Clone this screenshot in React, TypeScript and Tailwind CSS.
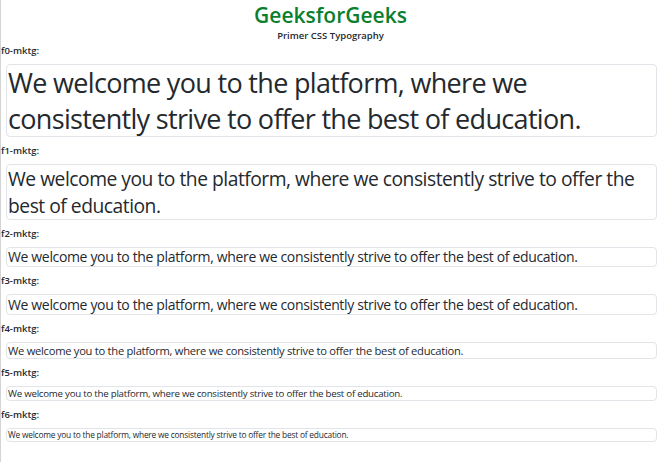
const TEXT =
  "We welcome you to the platform, where we consistently strive to offer the best of education.";

type Row = {
  label: string;
  textClass: string;
};

const ROWS: Row[] = [
  { label: "f0-mktg:", textClass: "text-[27px] leading-[35.5px] tracking-[-0.68px]" },
  { label: "f1-mktg:", textClass: "text-[19.25px] leading-[27px] tracking-[-0.48px]" },
  { label: "f2-mktg:", textClass: "text-[14px] leading-[18px] tracking-[-0.35px]" },
  { label: "f3-mktg:", textClass: "text-[14px] leading-[19px] tracking-[-0.35px]" },
  { label: "f4-mktg:", textClass: "text-[11.2px] leading-[15px] tracking-[-0.28px]" },
  { label: "f5-mktg:", textClass: "text-[9.7px] leading-[13px] tracking-[-0.24px]" },
  { label: "f6-mktg:", textClass: "text-[8.35px] leading-[12px] tracking-[-0.2px]" },
];

export default function App() {
  return (
    <div className="min-h-[462px] w-[660px] border-l border-[#d4d4d4] bg-white font-['Open_Sans',sans-serif] text-[#24292e]">
      <div className="pt-[1px] text-center">
        <h1 className="text-[21px] font-semibold leading-[28px] text-[#0b7f2f]">
          GeeksforGeeks
        </h1>
        <p className="text-[9.5px] font-semibold leading-[14px]">
          Primer CSS Typography
        </p>
      </div>

      {ROWS.map((row, i) => (
        <section key={row.label}>
          <p
            className={
              i === 0
                ? "mt-[1px] text-[9.5px] font-semibold leading-[13px]"
                : "mt-[7px] text-[9.5px] font-semibold leading-[13px]"
            }
          >
            {row.label}
          </p>
          <div
            className={`mt-[7px] mr-[3px] ml-[5px] rounded-[4px] border border-[#e1e4e8] px-[1px] ${row.textClass}`}
          >
            {TEXT}
          </div>
        </section>
      ))}
    </div>
  );
}
